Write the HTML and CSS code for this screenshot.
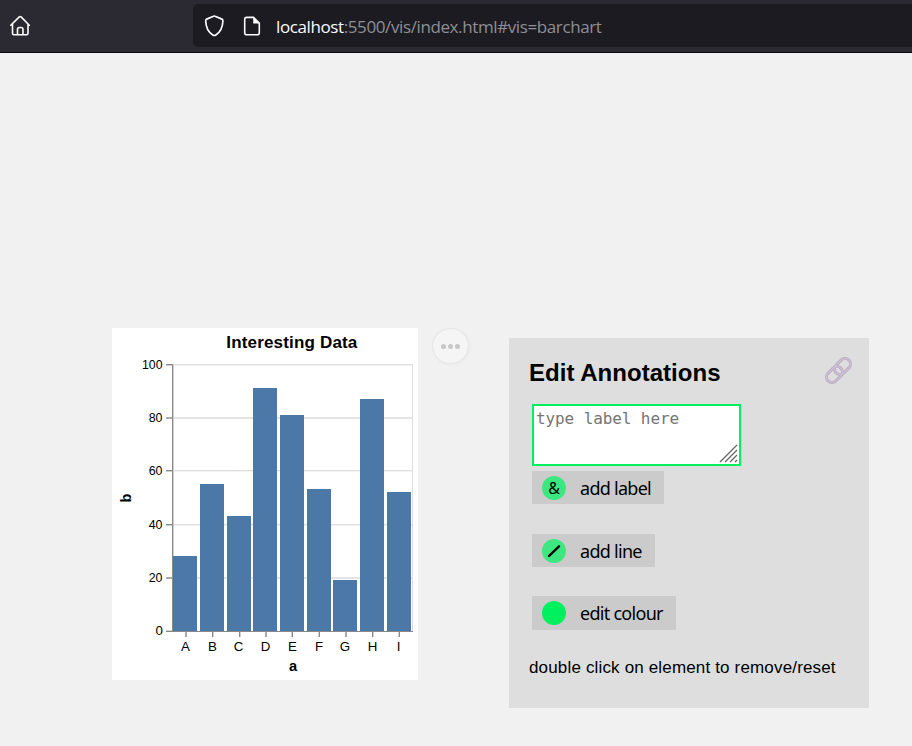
FILE: index.html
```html
<!DOCTYPE html>
<html lang="en">
<head>
<meta charset="utf-8">
<title>Interesting Data</title>
<link rel="stylesheet" href="styles.css">
</head>
<body>
<header class="toolbar">
  <svg class="home" width="22" height="22" viewBox="0 0 22 22" fill="none" stroke="#fbfbfe" stroke-width="1.6" stroke-linecap="round" stroke-linejoin="round"><path d="M1.8 10.2 10.3 1.9q.9-.8 1.8 0l8.2 8.3M3.5 9v9.300q0 1.500 1.500 1.500h12.500q1.500 0 1.500-1.500V9M8.500 19.500v-5q0-2 2-2h1.500q2 0 2 2v5"/></svg>
  <div class="urlbar">
    <svg class="shield" width="22" height="24" viewBox="0 0 22 24" fill="none" stroke="#fbfbfe" stroke-width="1.7" stroke-linejoin="round"><path d="M10.500 2.200q.8-.4 1.600 0l6.800 2.900q1 .5 1 1.600c-.1 6-2.600 11.300-7.100 14.300q-1.500 1-3 0C5.300 18 2.800 12.700 2.700 6.700q0-1.100 1-1.600z"/></svg>
    <svg class="file" width="18" height="20" viewBox="0 0 18 20"><path d="M3.700 1.400h6.800l5.800 5.700v9.600q0 2-2 2H3.700q-2 0-2-2V3.400q0-2 2-2z" fill="none" stroke="#fbfbfe" stroke-width="1.600"/><path d="M10.200 1.200v6.200h6.200z" fill="#fbfbfe"/></svg>
    <div class="url"><span class="host">localhost</span>:5500/vis/index.html#vis=barchart</div>
  </div>
</header>
<main class="page">
  <svg class="chart" width="306" height="352" viewBox="0 0 306 352">
    <rect width="306" height="352" fill="#fff"/>
    <text class="title" x="179.800" y="20" textLength="131">Interesting Data</text>
    <g fill="#ddd" shape-rendering="crispEdges">
      <path d="M60 36h241v1H60zM60 142h241v1H60zM60 196h241v1H60zM300 36h1v267h-1z"/>
      <path fill="#e4e4e4" d="M60 89h241v2H60zM60 249h241v2H60z"/>
      <path fill="#f4f4f4" d="M61 37h239v1H61zM60 143h240v1H60zM60 197h240v1H60z"/>
    </g>
    <g fill="#4c78a8" shape-rendering="crispEdges">
      <rect x="61" y="228" width="24" height="75"/>
      <rect x="88" y="156" width="24" height="147"/>
      <rect x="115" y="188" width="24" height="115"/>
      <rect x="141" y="60" width="24" height="243"/>
      <rect x="168" y="87" width="24" height="216"/>
      <rect x="195" y="161" width="24" height="142"/>
      <rect x="221" y="252" width="24" height="51"/>
      <rect x="248" y="71" width="24" height="232"/>
      <rect x="275" y="164" width="24" height="139"/>
    </g>
    <g fill="#888" shape-rendering="crispEdges">
      <path d="M60 36h1v267h-1zM54 303h247v1H54zM54 36h6v1h-6zM54 142h6v1h-6zM54 196h6v1h-6zM100 304h1v5h-1zM127 304h1v5h-1zM180 304h1v5h-1zM207 304h1v5h-1zM260 304h1v5h-1zM287 304h1v5h-1z"/>
      <path fill="#aaa" d="M54 89h6v2h-6zM54 249h6v2h-6zM73 304h2v5h-2zM153 304h2v5h-2zM233 304h2v5h-2z"/>
      <path fill="#d0d0d0" d="M61 37h1v191h-1zM54 302h6v1h-6zM54 37h6v1h-6zM54 143h6v1h-6zM54 197h6v1h-6zM101 304h1v5h-1zM128 304h1v5h-1zM179 304h1v5h-1zM206 304h1v5h-1zM261 304h1v5h-1zM286 304h1v5h-1z"/>
    </g>
    <g class="tick end">
      <text x="50.500" y="41" textLength="20.500" lengthAdjust="spacingAndGlyphs">100</text><text x="50.500" y="94" textLength="13.800" lengthAdjust="spacingAndGlyphs">80</text><text x="50.500" y="147" textLength="13.800" lengthAdjust="spacingAndGlyphs">60</text><text x="50.500" y="201" textLength="13.800" lengthAdjust="spacingAndGlyphs">40</text><text x="50.500" y="254" textLength="13.800" lengthAdjust="spacingAndGlyphs">20</text><text x="51" y="307">0</text>
    </g>
    <g class="tick mid">
      <text x="73.500" y="323">A</text><text x="100.500" y="323">B</text><text x="126.500" y="323">C</text><text x="153.500" y="323">D</text><text x="180.500" y="323">E</text><text x="207" y="323">F</text><text x="233" y="323">G</text><text x="260.500" y="323">H</text><text x="286.500" y="323">I</text>
    </g>
    <text class="axis" x="181" y="343">a</text>
    <text class="axis" transform="translate(19 170) rotate(-90)">b</text>
  </svg>
  <div class="more"><i></i><i></i><i></i></div>
  <section class="panel">
    <div class="heading">
      <h2>Edit Annotations</h2>
      <svg class="link" width="28" height="28" viewBox="0 0 28 28" fill="none"><g stroke="#bbacc4" stroke-width="3"><rect x="9.500" y="5" width="18" height="11" rx="5.500" transform="rotate(-45 18.500 10.500)"/><rect x="1.500" y="13" width="18" height="11" rx="5.500" transform="rotate(-45 10.500 18.500)"/></g><g stroke="#d0c5d6" stroke-width="1"><rect x="9.500" y="5" width="18" height="11" rx="5.500" transform="rotate(-45 18.500 10.500)"/><rect x="1.500" y="13" width="18" height="11" rx="5.500" transform="rotate(-45 10.500 18.500)"/></g></svg>
    </div>
    <div class="entry">type label here
      <svg class="grip" width="20" height="20" viewBox="0 0 20 20" stroke="#666" stroke-width="1.300"><path d="M1 18 18 1M6 18 18 6M11 18l7-7M16 18l2-2"/></svg>
    </div>
    <div class="button label"><span class="dot pale">&amp;</span><span>add label</span></div>
    <div class="button line"><span class="dot pale"><svg width="24" height="24" viewBox="0 0 24 24"><path d="M7 17 17 7.300" stroke="#000" stroke-width="2.400" stroke-linecap="round"/></svg></span><span>add line</span></div>
    <div class="button colour"><span class="dot"></span><span>edit colour</span></div>
    <p>double click on element to remove/reset</p>
  </section>
</main>
</body>
</html>
```
FILE: styles.css
```css
* { box-sizing: border-box; }
body {
  margin: 0;
  height: 746px;
  overflow: hidden;
  background: #f1f1f1;
  font-family: "Liberation Sans", Arial, sans-serif;
  color: #000;
}
.toolbar {
  display: flex;
  height: 53px;
  padding: 4px 0 0 9px;
  background: #2b2a33;
  border-bottom: 1px solid #0c0c0d;
}
.home { margin-top: 11px; }
.urlbar {
  display: flex;
  flex: 1;
  height: 43px;
  margin-left: 162px;
  padding-left: 10px;
  background: #1c1b22;
  border-radius: 5px 0 0 5px;
}
.shield { margin-top: 10px; }
.file { margin: 12px 0 0 18px; }
.url {
  margin-left: 15px;
  font: 17px/46px "Open Sans", "Noto Sans", sans-serif;
  letter-spacing: -0.390px;
  color: #8f8f94;
  white-space: nowrap;
}
.host { color: #fbfbfe; }
.page {
  display: flex;
  align-items: flex-start;
  padding: 275px 0 0 112px;
}
.chart { display: block; flex: none; }
.title { font-size: 17px; font-weight: bold; text-anchor: middle; }
.tick { font-size: 13.300px; }
.end { text-anchor: end; }
.mid { text-anchor: middle; }
.axis { font-size: 14.600px; font-weight: bold; text-anchor: middle; }
.more {
  display: flex;
  align-items: center;
  justify-content: center;
  gap: 2px;
  width: 37px;
  height: 36px;
  margin-left: 14px;
  border: 1px solid #e6e6e6;
  border-radius: 50%;
  background: #f5f5f5;
  box-shadow: 1px 1px 3px #e9e9e9;
}
.more i { width: 5px; height: 5px; border-radius: 50%; background: #c8c8c8; }
.panel {
  width: 360px;
  height: 370px;
  margin: 10px 0 0 40px;
  padding: 19px 17px 0 20px;
  background: #dedede;
}
.heading { display: flex; justify-content: space-between; height: 47px; }
h2 { margin: 2px 0 0; font-size: 24px; line-height: 28px; letter-spacing: 0.030px; white-space: nowrap; }
.link { margin: -1px 0 0; }
.entry {
  position: relative;
  width: 209px;
  height: 62px;
  margin-left: 3px;
  padding: 2px;
  border: 2px solid #00f05e;
  background: #fff;
  color: #757575;
  font: 16px/22px "DejaVu Sans Mono", monospace;
  letter-spacing: -0.100px;
  white-space: nowrap;
}
.grip { position: absolute; right: 0; bottom: 0; }
.button {
  display: flex;
  align-items: center;
  gap: 14px;
  height: 33px;
  margin-left: 3px;
  padding-left: 10px;
  border-radius: 1px;
  background: #cbcbcb;
  font: 18px/33px "Noto Sans", "Open Sans", sans-serif;
  letter-spacing: -0.720px;
  white-space: nowrap;
}
.label { width: 132px; margin-top: 5px; }
.line { width: 123px; margin-top: 30px; }
.label span + span, .line span + span { padding-top: 2px; }
.colour { width: 144px; height: 34px; margin-top: 29px; }
.dot {
  flex: none;
  width: 24px;
  height: 24px;
  border-radius: 50%;
  background: #00f05e;
  font-size: 16px;
  line-height: 24px;
  letter-spacing: 0;
  text-align: center;
}
.pale { background: #3de77f; }
.dot svg { display: block; }
p { margin: 28px 0 0; font-size: 17px; line-height: 20px; letter-spacing: 0.160px; white-space: nowrap; }
```
